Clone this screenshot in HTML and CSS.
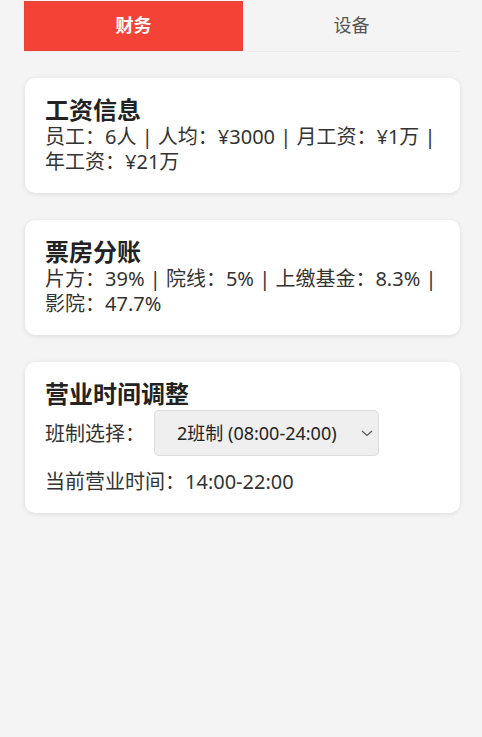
FILE: index.html
```html
<!DOCTYPE html>
<html lang="zh-CN">

<head>
    <meta charset="UTF-8">
    <meta name="viewport" content="width=device-width, initial-scale=1.0">
    <title>影院经营</title>
    <link rel="stylesheet" href="styles.css">
</head>

<body>
    <div class="container">
        <div class="tabs">
            <div class="tab active">财务</div>
            <div class="tab">设备</div>
        </div>

        <div class="panel">
            <div class="card">
                <div class="card-title">工资信息</div>
                <div class="card-text">员工：6人 | 人均：¥3000 | 月工资：¥1万 | 年工资：¥21万</div>
            </div>

            <div class="card">
                <div class="card-title">票房分账</div>
                <div class="card-text">片方：39% | 院线：5% | 上缴基金：8.3% | 影院：47.7%</div>
            </div>

            <div class="card">
                <div class="card-title">营业时间调整</div>
                <div class="shift-row">
                    <span class="card-text">班制选择：</span>
                    <div class="select-wrap">
                        <select id="shiftSelect">
                            <option>1班制 (08:00-16:00)</option>
                            <option selected>2班制 (08:00-24:00)</option>
                            <option>3班制 (00:00-24:00)</option>
                        </select>
                        <svg class="chevron" width="12" height="7" viewBox="0 0 12 7">
                            <path d="M1 1 L6 5.5 L11 1" fill="none" stroke="#555" stroke-width="1.2" />
                        </svg>
                    </div>
                </div>
                <div class="card-text current">当前营业时间：14:00-22:00</div>
            </div>
        </div>
    </div>
</body>

</html>
```

FILE: styles.css
```css
* {
    margin: 0;
    padding: 0;
    box-sizing: border-box;
    font-family: 'Noto Sans', 'Noto Sans CJK SC', sans-serif;
}

body {
    background: #f4f4f4;
    color: #222;
    min-height: 100vh;
}

.container {
    width: 436px;
    margin-left: 24px;
}

.tabs {
    display: flex;
    height: 52px;
    padding-top: 1px;
    border-bottom: 1px solid #ebebeb;
}

.tab {
    flex: 1;
    height: 50px;
    display: flex;
    justify-content: center;
    align-items: center;
    font-size: 18px;
    color: #555;
    padding-bottom: 5px;
}

.tab.active {
    background: #f44336;
    border: 1px solid #e0463a;
    color: white;
    font-weight: bold;
}

.panel {
    display: flex;
    flex-direction: column;
    gap: 27px;
    margin-top: 26px;
}

.card {
    background: white;
    border-radius: 10px;
    padding: 18px 20px 19px;
    box-shadow: 0 1px 5px rgba(0, 0, 0, 0.1);
    margin-left: 1px;
}

.card-title {
    font-size: 24px;
    font-weight: bold;
    line-height: 28px;
    color: #222;
}

.card-text {
    font-size: 20px;
    line-height: 25px;
    color: #333;
}

.shift-row {
    display: flex;
    align-items: center;
    gap: 9px;
    margin-top: 2px;
}

.select-wrap {
    position: relative;
    width: 225px;
    height: 46px;
}

select {
    appearance: none;
    width: 100%;
    height: 100%;
    background: #efefef;
    border: 1px solid #dcdcdc;
    border-radius: 5px;
    padding-left: 22px;
    font-size: 18px;
    color: #222;
}

.chevron {
    position: absolute;
    right: 6px;
    top: 20px;
    pointer-events: none;
}

.current {
    margin-top: 13px;
}
```
